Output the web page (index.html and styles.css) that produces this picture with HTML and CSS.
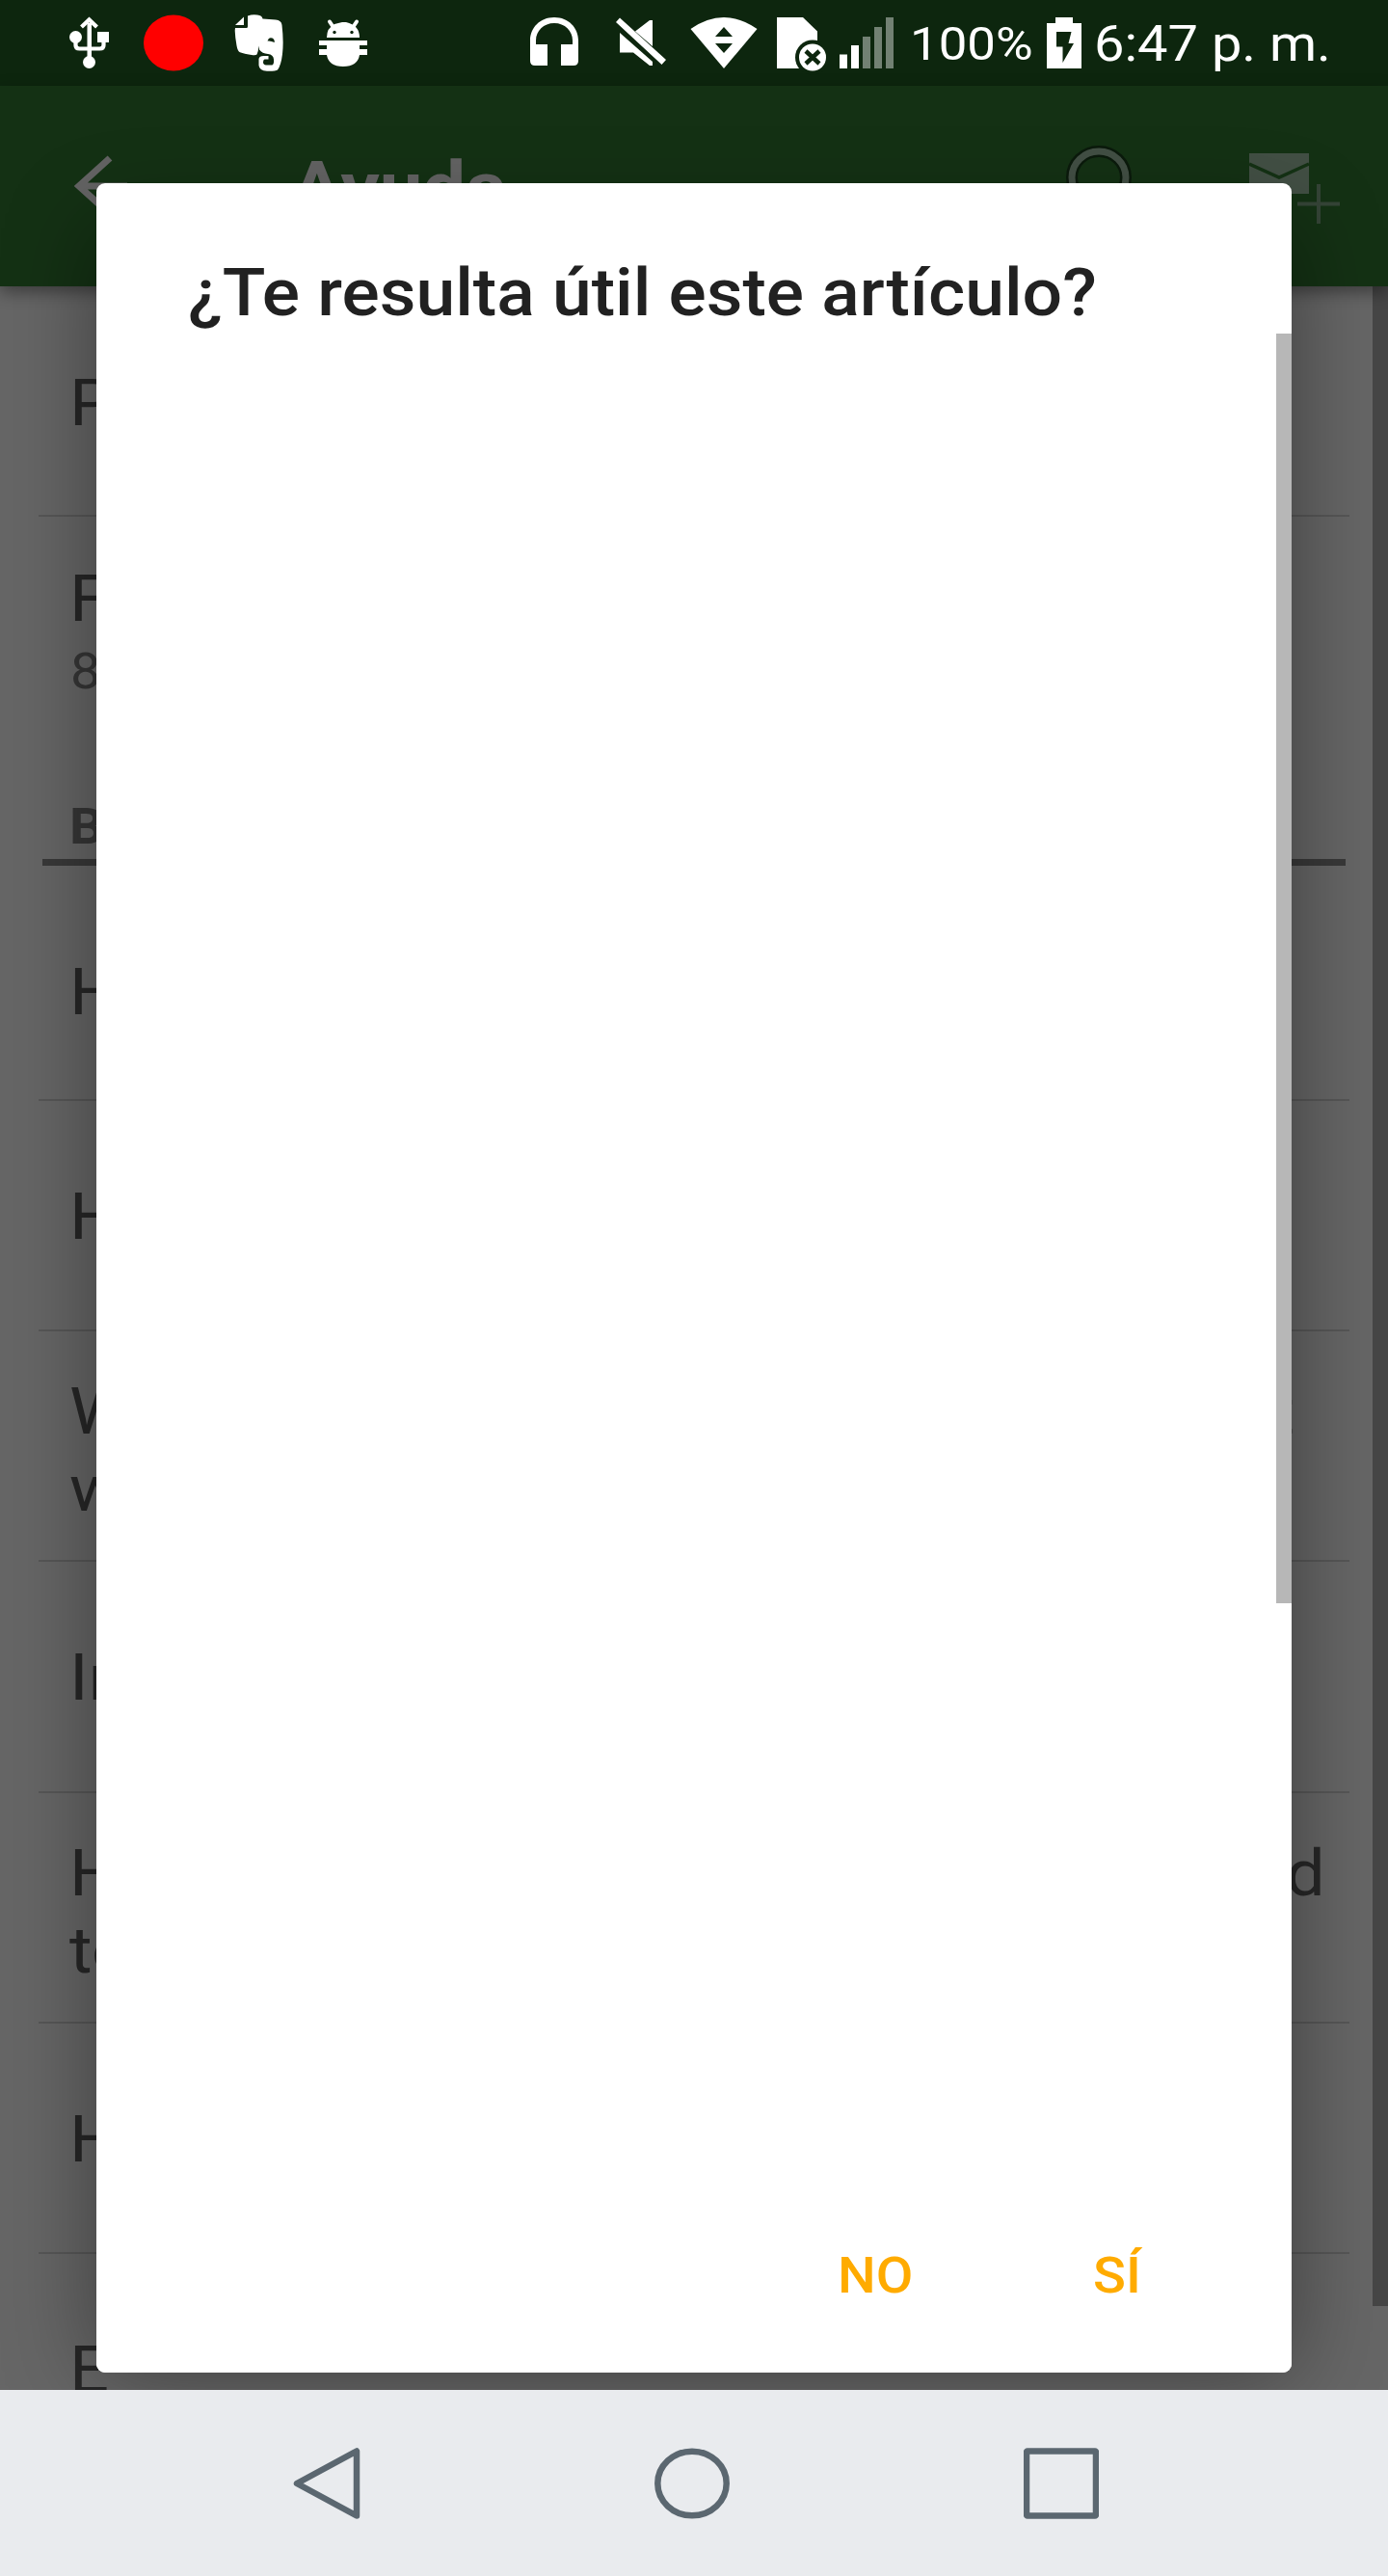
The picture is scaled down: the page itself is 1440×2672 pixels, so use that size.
FILE: index.html
```html
<!DOCTYPE html>
<html lang="es">
<head>
<meta charset="utf-8">
<title>Ayuda</title>
<link rel="stylesheet" href="styles.css">
</head>
<body>
<div class="screen">
  <header class="status">
    <svg class="status-icons" viewBox="0 0 940 89" width="940" height="89" fill="#fff">
      <g class="usb">
        <circle cx="78.500" cy="38.500" r="6.500"/><circle cx="92.500" cy="64.500" r="6.500"/>
        <path d="M101 33h12v11h-12zM90.500 24h4.500v38h-4.500z"/>
        <path d="M78.500 42v5q0 3.500 4 3.500h21q4 0 4-3.500v-6M84.500 28l8-7.500 8 7.500" fill="none" stroke="#fff" stroke-width="4.200"/>
      </g>
      <ellipse cx="180" cy="44.500" rx="31" ry="29" fill="#f00"/>
      <g class="elephant">
        <path d="M244 26l9-8.500v8.500z"/>
        <path d="M257 16.500q5-2 10-1 5 .5 5.500 4l13.500 1q6 .5 6.500 5.500 2 17 .5 30-1.500 12-5 16.500-2 1.500-11 1.300-8-.3-8.500-6V61q.5-3 5-3h5v3.500h-4q-1.500.5-1.500 3 0 2.500 3 3h6q2.500-.5 2-6-.5-5-6-5.500-6-.5-9-4.500l-.5-4q-.5 6-2 9-1 1-4 .7-8-1-13.500-3-2.500-1-3.500-7-1.500-8-1.800-15.500l.3-2.700h11.500q1.500 0 1.500-1.500z"/>
        <path d="M277.500 42.500q1.500-4.500 5-3 2.500 1 2.300 4.500-4-2-7.300-1.500z" fill="#0d260e"/>
      </g>
      <g class="bug">
        <path d="M339 39q0-10 8-14l8-2h4q14 3 14 16zM331 42h50v5h-8v4h8v6h-8q-2 12-17 12t-17-12h-8v-6h8v-4h-8z"/>
        <path d="M342 22.500l4 6M370 22.500l-4 6" stroke="#fff" stroke-width="4" stroke-linecap="round"/>
        <circle cx="347" cy="33.500" r="1.700" fill="#0d260e"/><circle cx="365" cy="33.500" r="1.700" fill="#0d260e"/>
      </g>
      <path d="M550 42c0-13 10-24 25-24s25 11 25 24v21q0 5-5 5h-13V46h12v-4c0-10-8-18-19-18s-19 8-19 18v4h12v22h-13q-5 0-5-5z"/>
      <path d="M643 18.500l48 43.500-4.500 5L639 23zM659 32.500L674 21h3v27zM643 34l34 30v4h-3l-17-13.500h-14z"/>
      <path d="M716.500 30q34.500-24 69 0L751 71z"/>
      <path d="M742 38l9-10 9 10zM742 45h18l-9 10z" fill="#0d260e"/>
      <path d="M806 18h27l15 14.500V71h-42z"/>
      <circle cx="843" cy="59.500" r="18" fill="#0d260e"/><circle cx="843" cy="59.500" r="14"/>
      <path d="M836 53l14 13M850 53l-14 13" stroke="#0d260e" stroke-width="4.500"/>
      <path d="M871 56.500h8V71h-8zM883 47h8v24h-8z"/>
      <path d="M895 38h8v33h-8zM907 28h8v43h-8zM919 18h8v53h-8z" opacity=".42"/>
    </svg>
    <span class="battery-text"><span class="wide">100%</span></span>
    <svg class="battery" viewBox="0 0 36 53" width="36" height="53"><path d="M9 0h18v6h9v47H0V6h9z" fill="#fff"/><path d="M10 15h15.500L22.500 27H28L16.500 47V30.500H10z" fill="#0d260e"/></svg>
    <span class="clock"><span class="wide">6:47 p. m.</span></span>
  </header>

  <div class="toolbar">
    <svg class="back" width="60" height="60" viewBox="0 0 60 60"><path d="M37 4L5 33l32 29M5 33h50" fill="none" stroke="#636363" stroke-width="7"/></svg>
    <h1 class="page-title"><span class="wide">Ayuda</span></h1>
    <svg class="search" width="90" height="90" viewBox="0 0 90 90" fill="none"><ellipse cx="45" cy="42" rx="28" ry="27" stroke="#0b1a0c" stroke-width="12"/><ellipse cx="45" cy="42" rx="28" ry="27" stroke="#424f44" stroke-width="7"/></svg>
    <svg class="mail" width="100" height="80" viewBox="0 0 100 80"><path d="M0 4h62v42H0z" fill="#424f44"/><path d="M0 15l31 14 31-14" fill="none" stroke="#143114" stroke-width="3.500"/><path d="M72 36v41M50 56.500h44" stroke="#354437" stroke-width="4"/></svg>
  </div>

  <main class="page">
    <ul class="list">
      <li class="row first"><span class="wide">P</span></li>
      <li class="row second"><span class="wide">F</span><small class="sub"><span class="wide">8</span></small></li>
      <li class="section"><span class="wide">B</span></li>
      <li class="row"><span class="wide">H</span></li>
      <li class="row"><span class="wide">H</span></li>
      <li class="row double"><span class="line line-w"><span class="wide">W</span><span class="wide end">t</span></span><span class="line"><span class="wide">w</span></span></li>
      <li class="row"><span class="wide">In</span></li>
      <li class="row double"><span class="line"><span class="wide">H</span><span class="wide end">d</span></span><span class="line"><span class="wide">to</span></span></li>
      <li class="row"><span class="wide">H</span></li>
      <li class="row last"><span class="wide">E</span></li>
    </ul>
    <div class="page-scroll"></div>
  </main>

  <nav class="navbar">
    <svg width="70" height="74" viewBox="0 0 70 74"><path d="M66 3.500v67L4 37z"/></svg>
    <svg width="78" height="74" viewBox="0 0 78 74"><ellipse cx="39" cy="37" rx="35.700" ry="33.300"/></svg>
    <svg width="78" height="74" viewBox="0 0 78 74"><rect x="3" y="3.500" width="72" height="67" rx="1"/></svg>
  </nav>

  <section class="dialog" role="dialog">
    <h2 class="dialog-title"><span class="wide">¿Te resulta útil este artículo?</span></h2>
    <div class="dialog-body"><div class="dialog-scroll"></div></div>
    <div class="actions">
      <button class="btn"><span class="wide">NO</span></button>
      <button class="btn"><span class="wide">SÍ</span></button>
    </div>
  </section>
</div>
</body>
</html>
```
FILE: styles.css
```css
* { box-sizing: border-box; }
body { margin: 0; font-family: Roboto, "Noto Sans", sans-serif; }
h1, h2, ul { margin: 0; padding: 0; }
svg { display: block; flex: none; }

.screen {
  position: relative;
  display: flex;
  flex-direction: column;
  width: 1440px;
  height: 2672px;
  overflow: hidden;
  background: #666;
}

.wide {
  display: inline-block;
  transform: scaleX(1.077);
  transform-origin: 0 50%;
  white-space: nowrap;
}

.status {
  display: flex;
  height: 89px;
  flex: none;
  background: #0d260e;
  color: #fff;
  white-space: nowrap;
}
.battery-text { width: 146px; padding: 16px 0 0 4px; font-size: 49px; line-height: 60px; }
.battery { margin-top: 18px; }
.clock { padding: 14px 0 0 13px; font-size: 52px; line-height: 64px; }

.toolbar {
  position: relative;
  display: flex;
  height: 208px;
  flex: none;
  background: #143114;
  box-shadow: 0 6px 16px rgba(0, 0, 0, .4);
}
.back { margin: 71px 0 0 77px; }
.page-title {
  width: 803px;
  padding: 62px 0 0 165px;
  color: #636363;
  font-size: 74px;
  font-weight: 700;
  line-height: 88px;
}
.search { margin: 53px 0 0 155px; }
.mail { margin: 66px 0 0 111px; }

.page { display: flex; flex: 1; min-height: 0; overflow: hidden; }
.list { width: 1424px; list-style: none; color: #272727; font-size: 67px; }
.row {
  height: 239.2px;
  margin: 0 24px 0 40px;
  padding: 80px 0 0 32px;
  border-bottom: 2px solid #575757;
  line-height: 80px;
}
.first { height: 238.500px; padding-top: 81px; }
.second { height: 270px; padding-top: 45px; border: 0; }
.sub { display: block; margin-top: -4px; padding-left: 1px; color: #363636; font-size: 52px; line-height: 80px; }
.section {
  height: 92px;
  margin: 0 28px 0 44px;
  padding: 20px 0 0 28px;
  border-bottom: 7px solid #393939;
  color: #363636;
  font-size: 52px;
  font-weight: 700;
  line-height: 64px;
}
.section + .row { height: 244.500px; padding-top: 91px; }
.double { padding-top: 47px; }
.line { display: flex; justify-content: space-between; }
.double .line:first-child { margin-top: -4px; }
.end { transform-origin: 100% 50%; margin-right: 25px; }
.line-w .end { margin-right: 57px; }
.last { border: 0; }
.page-scroll { width: 16px; height: 2095px; background: #464646; }

.navbar {
  position: relative;
  z-index: 3;
  display: flex;
  height: 193px;
  flex: none;
  padding: 60px 300px 0 304px;
  justify-content: space-between;
  background: #e9ebee;
}
.navbar svg { fill: none; stroke: #5b6770; stroke-width: 6.500; stroke-linejoin: round; }

.dialog {
  position: absolute;
  z-index: 2;
  left: 100px;
  top: 189.500px;
  display: flex;
  flex-direction: column;
  width: 1240px;
  height: 2271px;
}
.dialog::before, .dialog::after {
  content: "";
  position: absolute;
  z-index: -1;
  inset: 0;
  border-radius: 9px;
  background: #fff;
}
.dialog::before { top: 45px; box-shadow: 0 0 95px rgba(0, 0, 0, .4); }
.dialog-title {
  height: 156.500px;
  padding: 74px 0 0 95px;
  color: #212121;
  font-size: 68px;
  font-weight: 500;
  line-height: 80px;
}
.dialog-body { flex: 1; display: flex; justify-content: flex-end; }
.dialog-scroll { width: 16px; height: 1317px; background: #b7b7b7; }
.actions { display: flex; height: 192px; padding: 60px 0 0 769px; gap: 192px; }
.btn {
  height: 64px;
  padding: 0;
  border: 0;
  background: none;
  color: #ffab00;
  font: 500 52px/64px Roboto, sans-serif;
}
```
